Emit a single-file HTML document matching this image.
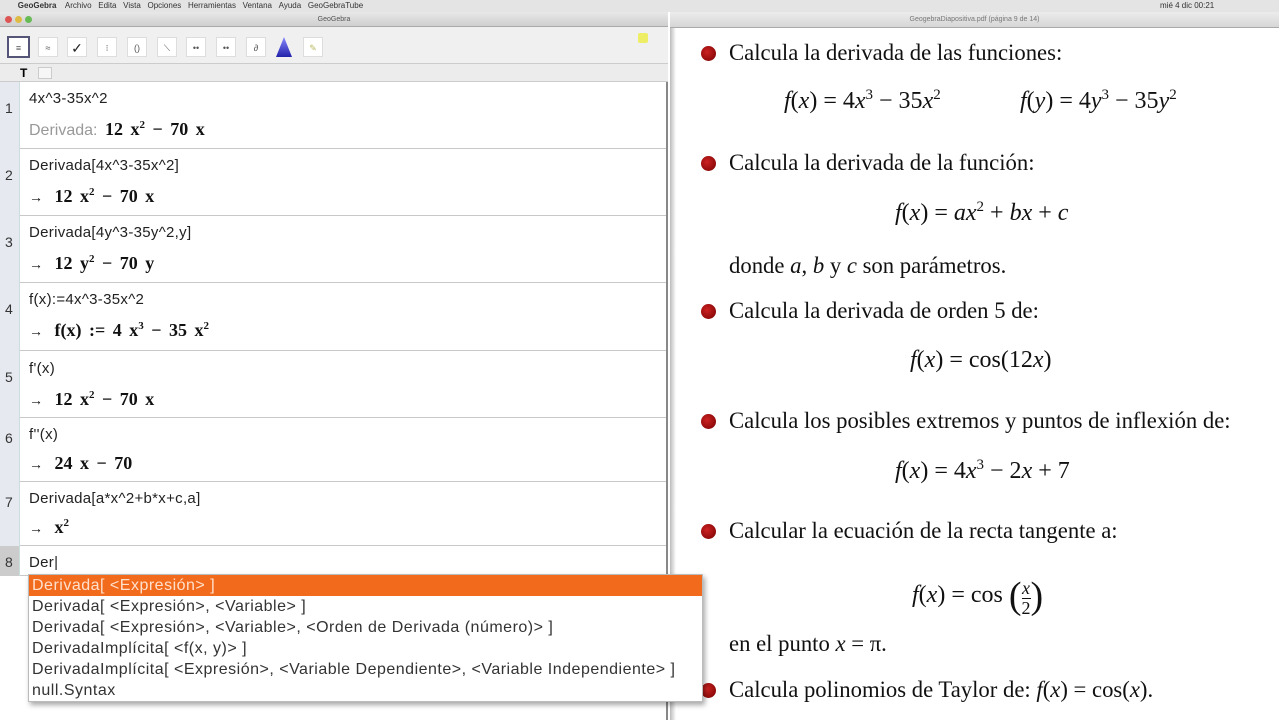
<!DOCTYPE html>
<html><head><meta charset="utf-8"><style>
*{margin:0;padding:0;box-sizing:border-box}
body{width:1279px;height:720px;overflow:hidden;background:#fff;position:relative;font-family:"Liberation Sans",sans-serif}
.a{position:absolute;white-space:nowrap}
#menu{left:0;top:0;width:1279px;height:12px;background:#e4e4e4;font-size:8px;color:#333;line-height:12px}
#lw{left:0;top:12px;width:668px;height:708px;background:#fff;border-right:2px solid #888}
#tb{left:0;top:12px;width:668px;height:15px;background:linear-gradient(#e8e8e8,#cfcfcf);border-bottom:1px solid #aaa;font-size:7px;color:#555;text-align:center;line-height:15px}
#tool{left:0;top:27px;width:668px;height:37px;background:#f0f0f0;border-bottom:1px solid #ccc}
.btn{position:absolute;top:37px;width:20px;height:20px;background:#fff;border:1px solid #ddd;font-size:9px;color:#555;text-align:center;line-height:20px}
#tabs{left:0;top:64px;width:668px;height:18px;background:#ececec;border-bottom:1px solid #ccc}
.num{position:absolute;left:0;width:20px;background:#e6e9f0;border-right:1px solid #cdd;font-size:14px;color:#333}
.row{position:absolute;left:0;width:666px;border-bottom:1px solid #c8c8c8}
.in{position:absolute;left:29px;font-size:15px;color:#222;letter-spacing:.3px}
.out{position:absolute;left:29px;font-size:18px;font-weight:bold;color:#111;font-family:"Liberation Serif",serif;word-spacing:3px}
.out .ar{font-family:"Liberation Sans";font-weight:normal;font-size:14px;margin-right:4px}
sup{font-size:11px}
#pop{left:28px;top:574px;width:675px;height:128px;background:#fff;border:1px solid #bbb;box-shadow:2px 3px 5px rgba(0,0,0,.35);font-size:16px;letter-spacing:.5px;color:#333;z-index:5}
#pop div{height:21px;line-height:21px;padding-left:3px}
#pw{left:670px;top:12px;width:609px;height:16px;background:linear-gradient(#ececec,#d6d6d6);border-bottom:1px solid #aaa;font-size:7px;color:#777;text-align:center;line-height:16px}
.s{font-family:"Liberation Serif",serif;font-size:22.7px;color:#111}
.b{position:absolute;width:15px;height:15px;border-radius:50%;background:radial-gradient(circle at 40% 40%,#c22,#700)}
.m{font-family:"Liberation Serif",serif;font-size:24px;color:#111}
.m sup{font-size:15px}
i{font-style:italic}
</style></head><body>
<div id="menu" class="a">&nbsp;&nbsp;&nbsp;&nbsp;&nbsp;&nbsp;&nbsp;&nbsp;<b>GeoGebra</b>&nbsp;&nbsp;&nbsp; Archivo &nbsp;&nbsp;Edita &nbsp;&nbsp;Vista &nbsp;&nbsp;Opciones &nbsp;&nbsp;Herramientas &nbsp;&nbsp;Ventana &nbsp;&nbsp;Ayuda &nbsp;&nbsp;GeoGebraTube<span style="position:absolute;left:1160px">mié 4 dic 00:21</span></div>
<div id="lw" class="a"></div>
<div id="tb" class="a">GeoGebra<span style="position:absolute;left:5px;top:4px;width:7px;height:7px;border-radius:50%;background:#d55"></span><span style="position:absolute;left:15px;top:4px;width:7px;height:7px;border-radius:50%;background:#db4"></span><span style="position:absolute;left:25px;top:4px;width:7px;height:7px;border-radius:50%;background:#6b5"></span></div>
<div id="tool" class="a"></div>
<div class="btn" style="left:7px;border:2px solid #557;width:23px;height:22px;top:36px">≡</div>
<div class="btn" style="left:38px">≈</div>
<div class="btn" style="left:67px;font-size:14px;color:#222">✓</div>
<div class="btn" style="left:97px">⁝</div>
<div class="btn" style="left:127px">()</div>
<div class="btn" style="left:157px">⟍</div>
<div class="btn" style="left:186px">••</div>
<div class="btn" style="left:216px">••</div>
<div class="btn" style="left:246px">∂</div>
<div class="a" style="left:276px;top:37px;width:16px;height:20px;background:linear-gradient(#88f,#22a);clip-path:polygon(50% 0,100% 100%,0 100%)"></div>
<div class="btn" style="left:303px;color:#bb6">✎</div>
<div class="a" style="left:638px;top:33px;width:10px;height:10px;background:#ee6;border-radius:2px"></div>
<div id="tabs" class="a"><span style="position:absolute;left:20px;top:2px;font-weight:bold;font-size:12px">T</span><span style="position:absolute;left:38px;top:3px;width:14px;height:12px;border:1px solid #ccc;background:#f6f6f6"></span></div>

<div class="row" style="top:82px;height:67px"></div><div class="num" style="top:82px;height:67px;padding:18px 0 0 5px">1</div>
<div class="in" style="top:90px">4x^3-35x^2</div>
<div class="out" style="top:119px"><span style="font-family:Liberation Sans;font-weight:normal;font-size:16px;color:#999;word-spacing:0">Derivada:</span> 12 x<sup>2</sup> − 70 x</div>

<div class="row" style="top:149px;height:67px"></div><div class="num" style="top:149px;height:67px;padding:18px 0 0 5px">2</div>
<div class="in" style="top:157px">Derivada[4x^3-35x^2]</div>
<div class="out" style="top:186px"><span class="ar">→</span> 12 x<sup>2</sup> − 70 x</div>

<div class="row" style="top:216px;height:67px"></div><div class="num" style="top:216px;height:67px;padding:18px 0 0 5px">3</div>
<div class="in" style="top:224px">Derivada[4y^3-35y^2,y]</div>
<div class="out" style="top:253px"><span class="ar">→</span> 12 y<sup>2</sup> − 70 y</div>

<div class="row" style="top:283px;height:68px"></div><div class="num" style="top:283px;height:68px;padding:18px 0 0 5px">4</div>
<div class="in" style="top:291px">f(x):=4x^3-35x^2</div>
<div class="out" style="top:320px"><span class="ar">→</span> f(x) := 4 x<sup>3</sup> − 35 x<sup>2</sup></div>

<div class="row" style="top:351px;height:67px"></div><div class="num" style="top:351px;height:67px;padding:18px 0 0 5px">5</div>
<div class="in" style="top:360px">f'(x)</div>
<div class="out" style="top:389px"><span class="ar">→</span> 12 x<sup>2</sup> − 70 x</div>

<div class="row" style="top:418px;height:64px"></div><div class="num" style="top:418px;height:64px;padding:12px 0 0 5px">6</div>
<div class="in" style="top:426px">f''(x)</div>
<div class="out" style="top:453px"><span class="ar">→</span> 24 x − 70</div>

<div class="row" style="top:482px;height:64px"></div><div class="num" style="top:482px;height:64px;padding:12px 0 0 5px">7</div>
<div class="in" style="top:490px">Derivada[a*x^2+b*x+c,a]</div>
<div class="out" style="top:517px"><span class="ar">→</span> x<sup>2</sup></div>

<div class="row" style="top:546px;height:30px"></div><div class="num" style="top:546px;height:30px;padding:8px 0 0 5px;background:#ccc">8</div>
<div class="in" style="top:554px">Der|</div>

<div id="pw" class="a">GeogebraDiapositiva.pdf (página 9 de 14)</div>
<div class="a" style="left:670px;top:28px;width:6px;height:692px;background:linear-gradient(90deg,#bbb,#fff)"></div>

<div class="b" style="left:701px;top:46px"></div><div class="a s" style="left:729px;top:40px">Calcula la derivada de las funciones:</div>
<div class="a m" style="left:784px;top:87px"><i>f</i>(<i>x</i>) = 4<i>x</i><sup>3</sup> − 35<i>x</i><sup>2</sup></div>
<div class="a m" style="left:1020px;top:87px"><i>f</i>(<i>y</i>) = 4<i>y</i><sup>3</sup> − 35<i>y</i><sup>2</sup></div>
<div class="b" style="left:701px;top:156px"></div><div class="a s" style="left:729px;top:150px">Calcula la derivada de la función:</div>
<div class="a m" style="left:895px;top:199px"><i>f</i>(<i>x</i>) = <i>ax</i><sup>2</sup> + <i>bx</i> + <i>c</i></div>
<div class="a s" style="left:729px;top:253px">donde <i>a</i>, <i>b</i> y <i>c</i> son parámetros.</div>
<div class="b" style="left:701px;top:304px"></div><div class="a s" style="left:729px;top:298px">Calcula la derivada de orden 5 de:</div>
<div class="a m" style="left:910px;top:347px"><i>f</i>(<i>x</i>) = cos(12<i>x</i>)</div>
<div class="b" style="left:701px;top:414px"></div><div class="a s" style="left:729px;top:408px">Calcula los posibles extremos y puntos de inflexión de:</div>
<div class="a m" style="left:895px;top:457px"><i>f</i>(<i>x</i>) = 4<i>x</i><sup>3</sup> − 2<i>x</i> + 7</div>
<div class="b" style="left:701px;top:524px"></div><div class="a s" style="left:729px;top:518px">Calcular la ecuación de la recta tangente a:</div>
<div class="a m" style="left:912px;top:574px"><i>f</i>(<i>x</i>) = cos <span style="font-size:38px;vertical-align:-6px">(</span><span style="display:inline-block;vertical-align:-12px;text-align:center;font-size:18px;line-height:19px"><i>x</i><br><span style="border-top:1px solid #111;display:block">2</span></span><span style="font-size:38px;vertical-align:-6px">)</span></div>
<div class="a s" style="left:729px;top:631px">en el punto <i>x</i> = π.</div>
<div class="b" style="left:701px;top:683px"></div><div class="a s" style="left:729px;top:677px">Calcula polinomios de Taylor de: <i>f</i>(<i>x</i>) = cos(<i>x</i>).</div>

<div id="pop" class="a">
<div style="background:#f26a1b;color:#ffe0cc">Derivada[ &lt;Expresión&gt; ]</div>
<div>Derivada[ &lt;Expresión&gt;, &lt;Variable&gt; ]</div>
<div>Derivada[ &lt;Expresión&gt;, &lt;Variable&gt;, &lt;Orden de Derivada (número)&gt; ]</div>
<div>DerivadaImplícita[ &lt;f(x, y)&gt; ]</div>
<div>DerivadaImplícita[ &lt;Expresión&gt;, &lt;Variable Dependiente&gt;, &lt;Variable Independiente&gt; ]</div>
<div>null.Syntax</div>
</div>
</body></html>
